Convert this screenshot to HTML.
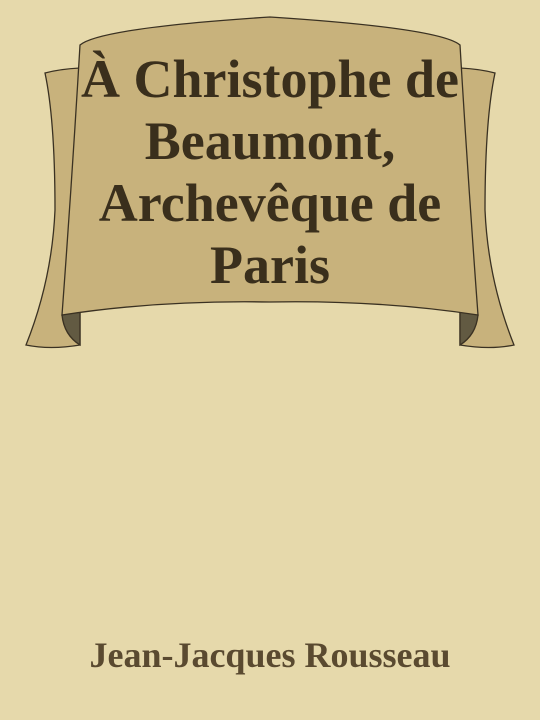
<!DOCTYPE html>
<html><head><meta charset="utf-8"><style>
html,body{margin:0;padding:0;background:#e6d9ab;}
svg{display:block}
</style></head><body>
<svg width="540" height="720" viewBox="0 0 540 720" xmlns="http://www.w3.org/2000/svg">
<rect width="540" height="720" fill="#e6d9ab"/>
<g stroke="#3a3122" stroke-width="1.3" fill="#c8b27c">
<path d="M45,73 Q60,69 80,68 L80,345 Q50,350 26,345 Q52,280 55,210 Q55,120 45,73 Z"/>
<path d="M495,73 Q480,69 460,68 L460,345 Q490,350 514,345 Q488,280 485,210 Q485,120 495,73 Z"/>
<path d="M62,315 Q70,312 80,312 L80,345 Q64,335 62,315 Z" fill="#625a42"/>
<path d="M478,315 Q470,312 460,312 L460,345 Q476,335 478,315 Z" fill="#625a42"/>
<path d="M80,45 Q100,28 270,17 Q440,28 460,45 Q468,180 478,315 Q380,300 270,302 Q160,300 62,315 Q72,180 80,45 Z"/>
</g>
<g font-family="Liberation Serif, serif" font-weight="bold" fill="#3a2f1c" font-size="54" text-anchor="middle">
<text x="270" y="97">À Christophe de</text>
<text x="270" y="159">Beaumont,</text>
<text x="270" y="221">Archevêque de</text>
<text x="270" y="283">Paris</text>
</g>
<text x="270" y="667" font-family="Liberation Serif, serif" font-weight="bold" font-size="36" fill="#5a4a30" text-anchor="middle">Jean-Jacques Rousseau</text>
</svg>
</body></html>
